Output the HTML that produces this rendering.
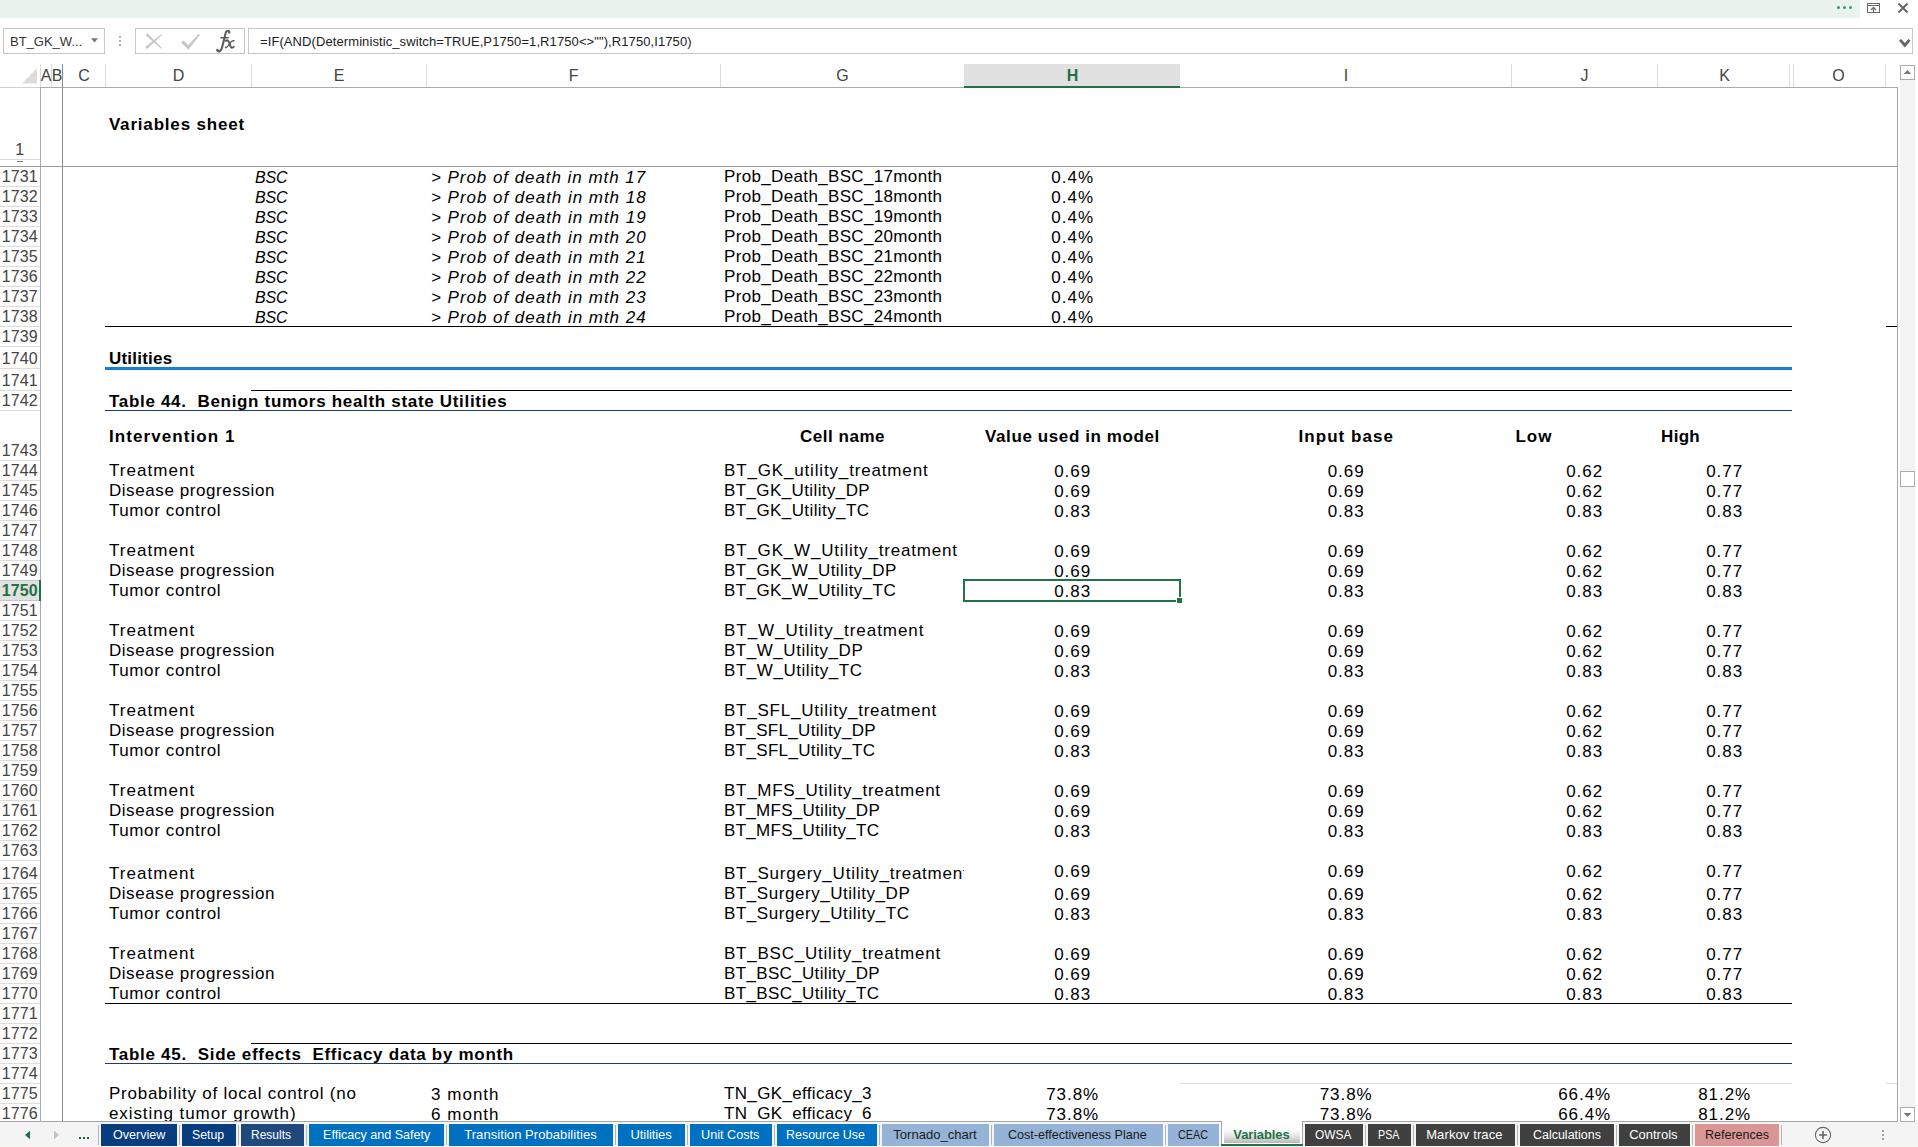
<!DOCTYPE html>
<html><head><meta charset="utf-8"><title>Excel</title><style>
html,body{margin:0;padding:0;background:#fff;}
body{width:1918px;height:1147px;position:relative;overflow:hidden;font-family:"Liberation Sans",sans-serif;}
div,span{position:absolute;box-sizing:border-box;white-space:pre;}
.c{font-size:17px;line-height:20px;height:20px;color:#000;letter-spacing:0.6px;}
.b{font-weight:bold;letter-spacing:0.55px;}
.i{font-style:italic;letter-spacing:0.9px;}
.rh{font-size:16px;line-height:20px;height:20px;left:0;width:39.5px;text-align:center;color:#444;letter-spacing:0.15px;}
.ch{font-size:16px;line-height:22px;height:22px;top:65px;text-align:center;color:#444;margin-left:0.6px;}
.hl{background:#000;height:1px;}
.vl{width:1px;}
.tab{top:1124px;height:22px;font-size:13px;line-height:22px;text-align:center;color:#fff;letter-spacing:0.1px;}
.ts{top:1125px;height:20px;width:1px;background:#b4b4b4;}
</style></head><body>
<div style="left:0;top:0;width:1860px;height:18px;background:#eaf4ee"></div>
<div style="left:1837px;top:6px;width:3px;height:3px;border-radius:50%;background:#3c9d6a"></div>
<div style="left:1843px;top:6px;width:3px;height:3px;border-radius:50%;background:#3c9d6a"></div>
<div style="left:1849px;top:6px;width:3px;height:3px;border-radius:50%;background:#3c9d6a"></div>
<svg style="position:absolute;left:1866px;top:2px" width="16" height="13" viewBox="0 0 16 13"><rect x="1.5" y="1.5" width="12" height="9" fill="none" stroke="#6a6a6a" stroke-width="1"/><path d="M1.5 3.5H13.5" stroke="#6a6a6a" stroke-width="1"/><path d="M7.5 10V5.6M5 8L7.5 5.4L10 8" fill="none" stroke="#6a6a6a" stroke-width="1.2"/></svg>
<svg style="position:absolute;left:1897px;top:2px" width="12" height="12" viewBox="0 0 12 12"><path d="M1.5 1.5L10.5 10.5M10.5 1.5L1.5 10.5" stroke="#666" stroke-width="2" fill="none"/></svg>
<div style="left:3px;top:28px;width:102px;height:26px;border:1px solid #c6c6c6;background:#fff"></div>
<div style="left:10px;top:34px;font-size:13px;line-height:16px;color:#333;letter-spacing:0px">BT_GK_W...</div>
<svg style="position:absolute;left:90px;top:37px" width="10" height="7" viewBox="0 0 10 7"><path d="M1 1.3H8L4.5 5.6Z" fill="#777"/></svg>
<div style="left:119px;top:36px;width:2px;height:2px;background:#b0b0b0"></div>
<div style="left:119px;top:40px;width:2px;height:2px;background:#b0b0b0"></div>
<div style="left:119px;top:44px;width:2px;height:2px;background:#b0b0b0"></div>
<div style="left:135px;top:28px;width:110px;height:26px;border:1px solid #c6c6c6;background:#fff"></div>
<svg style="position:absolute;left:140px;top:28px" width="100" height="26" viewBox="140 28 100 26"><path d="M145.5 35.3L147.5 33.3L162 47.9L161.2 48.7Z" fill="#c8c8c8"/><path d="M145.1 46.9L147.1 48.9L162 35L161.2 34.2Z" fill="#c8c8c8"/><path d="M181 42.6L183.6 40.4L188.2 45L198.8 33.7L199.9 35L188.4 49.8Z" fill="#c8c8c8"/><g fill="none" stroke="#5c5c5c" stroke-linecap="round"><path d="M229.4 32.1C229 30.6 227.1 30.3 226.2 31.8C225.3 33.4 225.1 35.6 224.5 37.8L222.3 46.5C221.8 48.5 221.2 50.8 219.6 51.2C218.6 51.5 217.6 51.1 217.2 50.2" stroke-width="2.1"/><path d="M220.8 37.8H228.2" stroke-width="1.5"/><path d="M225.9 40.9C227.4 39.7 228.5 40.6 229.1 42.4L230.5 46.2C231.1 47.9 232.3 48.3 233.7 46.9" stroke-width="2"/><path d="M233.8 40.7C232.4 40.1 231.5 41.2 230.5 42.6L228.3 45.6C227.3 47 226.5 48.2 225.5 47.4" stroke-width="1.3"/></g><circle cx="229.1" cy="32.4" r="1.2" fill="#666"/><circle cx="217.5" cy="50" r="1.2" fill="#666"/><circle cx="233.6" cy="40.8" r="0.9" fill="#666"/><circle cx="225.8" cy="47.3" r="0.9" fill="#666"/></svg>
<div style="left:248px;top:28px;width:1665px;height:26px;border:1px solid #c6c6c6;background:#fff"></div>
<div style="left:260px;top:34px;font-size:13px;line-height:16px;color:#222;letter-spacing:0.09px">=IF(AND(Deterministic_switch=TRUE,P1750=1,R1750&lt;&gt;&quot;&quot;),R1750,I1750)</div>
<svg style="position:absolute;left:1898px;top:38px" width="14" height="11" viewBox="0 0 14 11"><path d="M1 2.8L3.2 0.9L6.8 4.9L10.4 0.9L12.6 2.8L6.8 9.4Z" fill="#666"/></svg>
<div style="left:964px;top:64px;width:216px;height:22px;background:#e1e1e1"></div>
<div style="left:964px;top:86px;width:216px;height:2px;background:#217346"></div>
<div style="left:0;top:87px;width:40px;height:1px;background:#d0d0d0"></div>
<div style="left:40px;top:87px;width:924px;height:1px;background:#ababab"></div>
<div style="left:1180px;top:87px;width:718px;height:1px;background:#ababab"></div>
<svg style="position:absolute;left:21px;top:67px" width="17" height="17" viewBox="0 0 17 17"><path d="M16 1.2V16.6H0.8Z" fill="#dcdcdc"/></svg>
<div class="vl" style="left:40px;top:64px;height:23px;background:#dcdcdc"></div>
<div class="vl" style="left:51px;top:64px;height:23px;background:#dcdcdc"></div>
<div class="vl" style="left:105px;top:64px;height:23px;background:#dcdcdc"></div>
<div class="vl" style="left:251px;top:64px;height:23px;background:#dcdcdc"></div>
<div class="vl" style="left:426px;top:64px;height:23px;background:#dcdcdc"></div>
<div class="vl" style="left:720px;top:64px;height:23px;background:#dcdcdc"></div>
<div class="vl" style="left:1511px;top:64px;height:23px;background:#dcdcdc"></div>
<div class="vl" style="left:1657px;top:64px;height:23px;background:#dcdcdc"></div>
<div class="vl" style="left:1789px;top:64px;height:23px;background:#dcdcdc"></div>
<div class="vl" style="left:1793px;top:64px;height:23px;background:#dcdcdc"></div>
<div class="vl" style="left:1885px;top:64px;height:23px;background:#dcdcdc"></div>
<div class="ch" style="left:40px;width:11px">A</div>
<div class="ch" style="left:51px;width:11px">B</div>
<div class="ch" style="left:62px;width:43px">C</div>
<div class="ch" style="left:105px;width:146px">D</div>
<div class="ch" style="left:251px;width:175px">E</div>
<div class="ch" style="left:426px;width:294px">F</div>
<div class="ch" style="left:720px;width:244px">G</div>
<div class="ch" style="left:964px;width:216px;color:#217346;font-weight:bold">H</div>
<div class="ch" style="left:1180px;width:331px">I</div>
<div class="ch" style="left:1511px;width:146px">J</div>
<div class="ch" style="left:1657px;width:134px">K</div>
<div class="ch" style="left:1791px;width:94px">O</div>
<div class="vl" style="left:40px;top:87px;height:1035px;background:#ababab"></div>
<div style="left:0;top:159px;width:40px;height:1px;background:#dcdcdc"></div>
<div class="rh" style="top:140px">1</div>
<div style="left:17px;top:161px;width:6px;height:1px;background:#777"></div>
<div style="left:0;top:186px;width:40px;height:1px;background:#dcdcdc"></div>
<div class="rh" style="top:167px">1731</div>
<div style="left:0;top:206px;width:40px;height:1px;background:#dcdcdc"></div>
<div class="rh" style="top:187px">1732</div>
<div style="left:0;top:226px;width:40px;height:1px;background:#dcdcdc"></div>
<div class="rh" style="top:207px">1733</div>
<div style="left:0;top:246px;width:40px;height:1px;background:#dcdcdc"></div>
<div class="rh" style="top:227px">1734</div>
<div style="left:0;top:266px;width:40px;height:1px;background:#dcdcdc"></div>
<div class="rh" style="top:247px">1735</div>
<div style="left:0;top:286px;width:40px;height:1px;background:#dcdcdc"></div>
<div class="rh" style="top:267px">1736</div>
<div style="left:0;top:306px;width:40px;height:1px;background:#dcdcdc"></div>
<div class="rh" style="top:287px">1737</div>
<div style="left:0;top:326px;width:40px;height:1px;background:#dcdcdc"></div>
<div class="rh" style="top:307px">1738</div>
<div style="left:0;top:346px;width:40px;height:1px;background:#dcdcdc"></div>
<div class="rh" style="top:327px">1739</div>
<div style="left:0;top:368px;width:40px;height:1px;background:#dcdcdc"></div>
<div class="rh" style="top:349px">1740</div>
<div style="left:0;top:390px;width:40px;height:1px;background:#dcdcdc"></div>
<div class="rh" style="top:371px">1741</div>
<div style="left:0;top:410px;width:40px;height:1px;background:#dcdcdc"></div>
<div class="rh" style="top:391px">1742</div>
<div style="left:0;top:460px;width:40px;height:1px;background:#dcdcdc"></div>
<div class="rh" style="top:441px">1743</div>
<div style="left:0;top:480px;width:40px;height:1px;background:#dcdcdc"></div>
<div class="rh" style="top:461px">1744</div>
<div style="left:0;top:500px;width:40px;height:1px;background:#dcdcdc"></div>
<div class="rh" style="top:481px">1745</div>
<div style="left:0;top:520px;width:40px;height:1px;background:#dcdcdc"></div>
<div class="rh" style="top:501px">1746</div>
<div style="left:0;top:540px;width:40px;height:1px;background:#dcdcdc"></div>
<div class="rh" style="top:521px">1747</div>
<div style="left:0;top:560px;width:40px;height:1px;background:#dcdcdc"></div>
<div class="rh" style="top:541px">1748</div>
<div style="left:0;top:580px;width:40px;height:1px;background:#dcdcdc"></div>
<div class="rh" style="top:561px">1749</div>
<div style="left:0;top:600px;width:40px;height:1px;background:#dcdcdc"></div>
<div style="left:0;top:580px;width:40px;height:21px;background:#e1e1e1;border-top:1px solid #c6c6c6;border-bottom:1px solid #c6c6c6"></div>
<div style="left:39px;top:580px;width:2px;height:21px;background:#217346"></div>
<div class="rh" style="top:581px;color:#217346;font-weight:bold;letter-spacing:0.1px">1750</div>
<div style="left:0;top:620px;width:40px;height:1px;background:#dcdcdc"></div>
<div class="rh" style="top:601px">1751</div>
<div style="left:0;top:640px;width:40px;height:1px;background:#dcdcdc"></div>
<div class="rh" style="top:621px">1752</div>
<div style="left:0;top:660px;width:40px;height:1px;background:#dcdcdc"></div>
<div class="rh" style="top:641px">1753</div>
<div style="left:0;top:680px;width:40px;height:1px;background:#dcdcdc"></div>
<div class="rh" style="top:661px">1754</div>
<div style="left:0;top:700px;width:40px;height:1px;background:#dcdcdc"></div>
<div class="rh" style="top:681px">1755</div>
<div style="left:0;top:720px;width:40px;height:1px;background:#dcdcdc"></div>
<div class="rh" style="top:701px">1756</div>
<div style="left:0;top:740px;width:40px;height:1px;background:#dcdcdc"></div>
<div class="rh" style="top:721px">1757</div>
<div style="left:0;top:760px;width:40px;height:1px;background:#dcdcdc"></div>
<div class="rh" style="top:741px">1758</div>
<div style="left:0;top:780px;width:40px;height:1px;background:#dcdcdc"></div>
<div class="rh" style="top:761px">1759</div>
<div style="left:0;top:800px;width:40px;height:1px;background:#dcdcdc"></div>
<div class="rh" style="top:781px">1760</div>
<div style="left:0;top:820px;width:40px;height:1px;background:#dcdcdc"></div>
<div class="rh" style="top:801px">1761</div>
<div style="left:0;top:840px;width:40px;height:1px;background:#dcdcdc"></div>
<div class="rh" style="top:821px">1762</div>
<div style="left:0;top:860px;width:40px;height:1px;background:#dcdcdc"></div>
<div class="rh" style="top:841px">1763</div>
<div style="left:0;top:883px;width:40px;height:1px;background:#dcdcdc"></div>
<div class="rh" style="top:864px">1764</div>
<div style="left:0;top:903px;width:40px;height:1px;background:#dcdcdc"></div>
<div class="rh" style="top:884px">1765</div>
<div style="left:0;top:923px;width:40px;height:1px;background:#dcdcdc"></div>
<div class="rh" style="top:904px">1766</div>
<div style="left:0;top:943px;width:40px;height:1px;background:#dcdcdc"></div>
<div class="rh" style="top:924px">1767</div>
<div style="left:0;top:963px;width:40px;height:1px;background:#dcdcdc"></div>
<div class="rh" style="top:944px">1768</div>
<div style="left:0;top:983px;width:40px;height:1px;background:#dcdcdc"></div>
<div class="rh" style="top:964px">1769</div>
<div style="left:0;top:1003px;width:40px;height:1px;background:#dcdcdc"></div>
<div class="rh" style="top:984px">1770</div>
<div style="left:0;top:1023px;width:40px;height:1px;background:#dcdcdc"></div>
<div class="rh" style="top:1004px">1771</div>
<div style="left:0;top:1043px;width:40px;height:1px;background:#dcdcdc"></div>
<div class="rh" style="top:1024px">1772</div>
<div style="left:0;top:1063px;width:40px;height:1px;background:#dcdcdc"></div>
<div class="rh" style="top:1044px">1773</div>
<div style="left:0;top:1083px;width:40px;height:1px;background:#dcdcdc"></div>
<div class="rh" style="top:1064px">1774</div>
<div style="left:0;top:1103px;width:40px;height:1px;background:#dcdcdc"></div>
<div class="rh" style="top:1084px">1775</div>
<div class="rh" style="top:1104px">1776</div>
<div class="vl" style="left:62px;top:64px;height:1058px;background:#8e8e8e"></div>
<div style="left:0;top:166px;width:1898px;height:1px;background:#9b9b9b"></div>
<div class="vl" style="left:1897px;top:87px;height:1035px;background:#a6a6a6"></div>
<div class="c b" style="left:108.90px;top:115px;letter-spacing:0.818px;">Variables sheet</div>
<div class="c i" style="left:255.00px;top:168px;letter-spacing:-0.112px;font-size:16px;">BSC</div>
<div class="c i" style="left:431.00px;top:168px;letter-spacing:0.947px;">&gt; Prob of death in mth 17</div>
<div class="c " style="left:724.00px;top:167px;letter-spacing:0.345px;">Prob_Death_BSC_17month</div>
<div class="c " style="left:1051.30px;top:168px;letter-spacing:1.017px;">0.4%</div>
<div class="c i" style="left:255.00px;top:188px;letter-spacing:-0.112px;font-size:16px;">BSC</div>
<div class="c i" style="left:431.00px;top:188px;letter-spacing:0.968px;">&gt; Prob of death in mth 18</div>
<div class="c " style="left:724.00px;top:187px;letter-spacing:0.345px;">Prob_Death_BSC_18month</div>
<div class="c " style="left:1051.30px;top:188px;letter-spacing:1.017px;">0.4%</div>
<div class="c i" style="left:255.00px;top:208px;letter-spacing:-0.112px;font-size:16px;">BSC</div>
<div class="c i" style="left:431.00px;top:208px;letter-spacing:0.968px;">&gt; Prob of death in mth 19</div>
<div class="c " style="left:724.00px;top:207px;letter-spacing:0.345px;">Prob_Death_BSC_19month</div>
<div class="c " style="left:1051.30px;top:208px;letter-spacing:1.017px;">0.4%</div>
<div class="c i" style="left:255.00px;top:228px;letter-spacing:-0.112px;font-size:16px;">BSC</div>
<div class="c i" style="left:431.00px;top:228px;letter-spacing:0.968px;">&gt; Prob of death in mth 20</div>
<div class="c " style="left:724.00px;top:227px;letter-spacing:0.345px;">Prob_Death_BSC_20month</div>
<div class="c " style="left:1051.30px;top:228px;letter-spacing:1.017px;">0.4%</div>
<div class="c i" style="left:255.00px;top:248px;letter-spacing:-0.112px;font-size:16px;">BSC</div>
<div class="c i" style="left:431.00px;top:248px;letter-spacing:0.968px;">&gt; Prob of death in mth 21</div>
<div class="c " style="left:724.00px;top:247px;letter-spacing:0.345px;">Prob_Death_BSC_21month</div>
<div class="c " style="left:1051.30px;top:248px;letter-spacing:1.017px;">0.4%</div>
<div class="c i" style="left:255.00px;top:268px;letter-spacing:-0.112px;font-size:16px;">BSC</div>
<div class="c i" style="left:431.00px;top:268px;letter-spacing:0.968px;">&gt; Prob of death in mth 22</div>
<div class="c " style="left:724.00px;top:267px;letter-spacing:0.345px;">Prob_Death_BSC_22month</div>
<div class="c " style="left:1051.30px;top:268px;letter-spacing:1.017px;">0.4%</div>
<div class="c i" style="left:255.00px;top:288px;letter-spacing:-0.112px;font-size:16px;">BSC</div>
<div class="c i" style="left:431.00px;top:288px;letter-spacing:0.968px;">&gt; Prob of death in mth 23</div>
<div class="c " style="left:724.00px;top:287px;letter-spacing:0.345px;">Prob_Death_BSC_23month</div>
<div class="c " style="left:1051.30px;top:288px;letter-spacing:1.017px;">0.4%</div>
<div class="c i" style="left:255.00px;top:308px;letter-spacing:-0.112px;font-size:16px;">BSC</div>
<div class="c i" style="left:431.00px;top:308px;letter-spacing:0.968px;">&gt; Prob of death in mth 24</div>
<div class="c " style="left:724.00px;top:307px;letter-spacing:0.345px;">Prob_Death_BSC_24month</div>
<div class="c " style="left:1051.30px;top:308px;letter-spacing:1.017px;">0.4%</div>
<div style="left:105px;top:326px;width:1687px;height:1px;background:#000"></div>
<div style="left:1886px;top:326px;width:11px;height:1px;background:#000"></div>
<div class="c b" style="left:108.90px;top:349px;letter-spacing:0.228px;">Utilities</div>
<div style="left:105px;top:367px;width:1687px;height:3px;background:#1380d3"></div>
<div style="left:251px;top:390px;width:1541px;height:1px;background:#000"></div>
<div class="c b" style="left:109.00px;top:392px;letter-spacing:0.684px;">Table 44.  Benign tumors health state Utilities</div>
<div style="left:105px;top:410px;width:1687px;height:1px;background:#1f3d6b"></div>
<div class="c b" style="left:108.90px;top:427px;letter-spacing:1.092px;">Intervention 1</div>
<div class="c b" style="left:799.90px;top:427px;letter-spacing:0.544px;">Cell name</div>
<div class="c b" style="left:985.05px;top:427px;letter-spacing:0.6px;">Value used in model</div>
<div class="c b" style="left:1298.55px;top:427px;letter-spacing:1.033px;">Input base</div>
<div class="c b" style="left:1515.40px;top:427px;letter-spacing:1.088px;">Low</div>
<div class="c b" style="left:1661.10px;top:427px;letter-spacing:0.283px;">High</div>
<div class="c " style="left:108.90px;top:461px;letter-spacing:1.053px;">Treatment</div>
<div class="c " style="left:724.00px;top:461px;letter-spacing:0.839px;">BT_GK_utility_treatment</div>
<div class="c " style="left:1054.15px;top:462px;letter-spacing:0.992px;">0.69</div>
<div class="c " style="left:1327.65px;top:462px;letter-spacing:0.992px;">0.69</div>
<div class="c " style="left:1566.15px;top:462px;letter-spacing:0.992px;">0.62</div>
<div class="c " style="left:1706.15px;top:462px;letter-spacing:0.992px;">0.77</div>
<div class="c " style="left:108.90px;top:481px;letter-spacing:0.589px;">Disease progression</div>
<div class="c " style="left:724.00px;top:481px;letter-spacing:0.388px;">BT_GK_Utility_DP</div>
<div class="c " style="left:1054.15px;top:482px;letter-spacing:0.992px;">0.69</div>
<div class="c " style="left:1327.65px;top:482px;letter-spacing:0.992px;">0.69</div>
<div class="c " style="left:1566.15px;top:482px;letter-spacing:0.992px;">0.62</div>
<div class="c " style="left:1706.15px;top:482px;letter-spacing:0.992px;">0.77</div>
<div class="c " style="left:108.90px;top:501px;letter-spacing:0.621px;">Tumor control</div>
<div class="c " style="left:724.00px;top:501px;letter-spacing:0.408px;">BT_GK_Utility_TC</div>
<div class="c " style="left:1054.15px;top:502px;letter-spacing:0.992px;">0.83</div>
<div class="c " style="left:1327.65px;top:502px;letter-spacing:0.992px;">0.83</div>
<div class="c " style="left:1566.15px;top:502px;letter-spacing:0.992px;">0.83</div>
<div class="c " style="left:1706.15px;top:502px;letter-spacing:0.992px;">0.83</div>
<div class="c " style="left:108.90px;top:541px;letter-spacing:1.053px;">Treatment</div>
<div class="c " style="left:724.00px;top:541px;letter-spacing:0.812px;">BT_GK_W_Utility_treatment</div>
<div class="c " style="left:1054.15px;top:542px;letter-spacing:0.992px;">0.69</div>
<div class="c " style="left:1327.65px;top:542px;letter-spacing:0.992px;">0.69</div>
<div class="c " style="left:1566.15px;top:542px;letter-spacing:0.992px;">0.62</div>
<div class="c " style="left:1706.15px;top:542px;letter-spacing:0.992px;">0.77</div>
<div class="c " style="left:108.90px;top:561px;letter-spacing:0.589px;">Disease progression</div>
<div class="c " style="left:724.00px;top:561px;letter-spacing:0.413px;">BT_GK_W_Utility_DP</div>
<div class="c " style="left:1054.15px;top:562px;letter-spacing:0.992px;">0.69</div>
<div class="c " style="left:1327.65px;top:562px;letter-spacing:0.992px;">0.69</div>
<div class="c " style="left:1566.15px;top:562px;letter-spacing:0.992px;">0.62</div>
<div class="c " style="left:1706.15px;top:562px;letter-spacing:0.992px;">0.77</div>
<div class="c " style="left:108.90px;top:581px;letter-spacing:0.621px;">Tumor control</div>
<div class="c " style="left:724.00px;top:581px;letter-spacing:0.431px;">BT_GK_W_Utility_TC</div>
<div class="c " style="left:1054.15px;top:582px;letter-spacing:0.992px;">0.83</div>
<div class="c " style="left:1327.65px;top:582px;letter-spacing:0.992px;">0.83</div>
<div class="c " style="left:1566.15px;top:582px;letter-spacing:0.992px;">0.83</div>
<div class="c " style="left:1706.15px;top:582px;letter-spacing:0.992px;">0.83</div>
<div class="c " style="left:108.90px;top:621px;letter-spacing:1.053px;">Treatment</div>
<div class="c " style="left:724.00px;top:621px;letter-spacing:0.952px;">BT_W_Utility_treatment</div>
<div class="c " style="left:1054.15px;top:622px;letter-spacing:0.992px;">0.69</div>
<div class="c " style="left:1327.65px;top:622px;letter-spacing:0.992px;">0.69</div>
<div class="c " style="left:1566.15px;top:622px;letter-spacing:0.992px;">0.62</div>
<div class="c " style="left:1706.15px;top:622px;letter-spacing:0.992px;">0.77</div>
<div class="c " style="left:108.90px;top:641px;letter-spacing:0.589px;">Disease progression</div>
<div class="c " style="left:724.00px;top:641px;letter-spacing:0.532px;">BT_W_Utility_DP</div>
<div class="c " style="left:1054.15px;top:642px;letter-spacing:0.992px;">0.69</div>
<div class="c " style="left:1327.65px;top:642px;letter-spacing:0.992px;">0.69</div>
<div class="c " style="left:1566.15px;top:642px;letter-spacing:0.992px;">0.62</div>
<div class="c " style="left:1706.15px;top:642px;letter-spacing:0.992px;">0.77</div>
<div class="c " style="left:108.90px;top:661px;letter-spacing:0.621px;">Tumor control</div>
<div class="c " style="left:724.00px;top:661px;letter-spacing:0.545px;">BT_W_Utility_TC</div>
<div class="c " style="left:1054.15px;top:662px;letter-spacing:0.992px;">0.83</div>
<div class="c " style="left:1327.65px;top:662px;letter-spacing:0.992px;">0.83</div>
<div class="c " style="left:1566.15px;top:662px;letter-spacing:0.992px;">0.83</div>
<div class="c " style="left:1706.15px;top:662px;letter-spacing:0.992px;">0.83</div>
<div class="c " style="left:108.90px;top:701px;letter-spacing:1.053px;">Treatment</div>
<div class="c " style="left:724.00px;top:701px;letter-spacing:0.76px;">BT_SFL_Utility_treatment</div>
<div class="c " style="left:1054.15px;top:702px;letter-spacing:0.992px;">0.69</div>
<div class="c " style="left:1327.65px;top:702px;letter-spacing:0.992px;">0.69</div>
<div class="c " style="left:1566.15px;top:702px;letter-spacing:0.992px;">0.62</div>
<div class="c " style="left:1706.15px;top:702px;letter-spacing:0.992px;">0.77</div>
<div class="c " style="left:108.90px;top:721px;letter-spacing:0.589px;">Disease progression</div>
<div class="c " style="left:724.00px;top:721px;letter-spacing:0.325px;">BT_SFL_Utility_DP</div>
<div class="c " style="left:1054.15px;top:722px;letter-spacing:0.992px;">0.69</div>
<div class="c " style="left:1327.65px;top:722px;letter-spacing:0.992px;">0.69</div>
<div class="c " style="left:1566.15px;top:722px;letter-spacing:0.992px;">0.62</div>
<div class="c " style="left:1706.15px;top:722px;letter-spacing:0.992px;">0.77</div>
<div class="c " style="left:108.90px;top:741px;letter-spacing:0.621px;">Tumor control</div>
<div class="c " style="left:724.00px;top:741px;letter-spacing:0.344px;">BT_SFL_Utility_TC</div>
<div class="c " style="left:1054.15px;top:742px;letter-spacing:0.992px;">0.83</div>
<div class="c " style="left:1327.65px;top:742px;letter-spacing:0.992px;">0.83</div>
<div class="c " style="left:1566.15px;top:742px;letter-spacing:0.992px;">0.83</div>
<div class="c " style="left:1706.15px;top:742px;letter-spacing:0.992px;">0.83</div>
<div class="c " style="left:108.90px;top:781px;letter-spacing:1.053px;">Treatment</div>
<div class="c " style="left:724.00px;top:781px;letter-spacing:0.727px;">BT_MFS_Utility_treatment</div>
<div class="c " style="left:1054.15px;top:782px;letter-spacing:0.992px;">0.69</div>
<div class="c " style="left:1327.65px;top:782px;letter-spacing:0.992px;">0.69</div>
<div class="c " style="left:1566.15px;top:782px;letter-spacing:0.992px;">0.62</div>
<div class="c " style="left:1706.15px;top:782px;letter-spacing:0.992px;">0.77</div>
<div class="c " style="left:108.90px;top:801px;letter-spacing:0.589px;">Disease progression</div>
<div class="c " style="left:724.00px;top:801px;letter-spacing:0.286px;">BT_MFS_Utility_DP</div>
<div class="c " style="left:1054.15px;top:802px;letter-spacing:0.992px;">0.69</div>
<div class="c " style="left:1327.65px;top:802px;letter-spacing:0.992px;">0.69</div>
<div class="c " style="left:1566.15px;top:802px;letter-spacing:0.992px;">0.62</div>
<div class="c " style="left:1706.15px;top:802px;letter-spacing:0.992px;">0.77</div>
<div class="c " style="left:108.90px;top:821px;letter-spacing:0.621px;">Tumor control</div>
<div class="c " style="left:724.00px;top:821px;letter-spacing:0.297px;">BT_MFS_Utility_TC</div>
<div class="c " style="left:1054.15px;top:822px;letter-spacing:0.992px;">0.83</div>
<div class="c " style="left:1327.65px;top:822px;letter-spacing:0.992px;">0.83</div>
<div class="c " style="left:1566.15px;top:822px;letter-spacing:0.992px;">0.83</div>
<div class="c " style="left:1706.15px;top:822px;letter-spacing:0.992px;">0.83</div>
<div class="c " style="left:108.90px;top:864px;letter-spacing:1.053px;">Treatment</div>
<div style="left:720px;top:864px;width:244px;height:20px;overflow:hidden"><div class="c " style="left:4.00px;top:0;letter-spacing:0.767px">BT_Surgery_Utility_treatment</div></div>
<div class="c " style="left:1054.15px;top:862px;letter-spacing:0.992px;">0.69</div>
<div class="c " style="left:1327.65px;top:862px;letter-spacing:0.992px;">0.69</div>
<div class="c " style="left:1566.15px;top:862px;letter-spacing:0.992px;">0.62</div>
<div class="c " style="left:1706.15px;top:862px;letter-spacing:0.992px;">0.77</div>
<div class="c " style="left:108.90px;top:884px;letter-spacing:0.589px;">Disease progression</div>
<div class="c " style="left:724.00px;top:884px;letter-spacing:0.547px;">BT_Surgery_Utility_DP</div>
<div class="c " style="left:1054.15px;top:885px;letter-spacing:0.992px;">0.69</div>
<div class="c " style="left:1327.65px;top:885px;letter-spacing:0.992px;">0.69</div>
<div class="c " style="left:1566.15px;top:885px;letter-spacing:0.992px;">0.62</div>
<div class="c " style="left:1706.15px;top:885px;letter-spacing:0.992px;">0.77</div>
<div class="c " style="left:108.90px;top:904px;letter-spacing:0.621px;">Tumor control</div>
<div class="c " style="left:724.00px;top:904px;letter-spacing:0.556px;">BT_Surgery_Utility_TC</div>
<div class="c " style="left:1054.15px;top:905px;letter-spacing:0.992px;">0.83</div>
<div class="c " style="left:1327.65px;top:905px;letter-spacing:0.992px;">0.83</div>
<div class="c " style="left:1566.15px;top:905px;letter-spacing:0.992px;">0.83</div>
<div class="c " style="left:1706.15px;top:905px;letter-spacing:0.992px;">0.83</div>
<div class="c " style="left:108.90px;top:944px;letter-spacing:1.053px;">Treatment</div>
<div class="c " style="left:724.00px;top:944px;letter-spacing:0.771px;">BT_BSC_Utility_treatment</div>
<div class="c " style="left:1054.15px;top:945px;letter-spacing:0.992px;">0.69</div>
<div class="c " style="left:1327.65px;top:945px;letter-spacing:0.992px;">0.69</div>
<div class="c " style="left:1566.15px;top:945px;letter-spacing:0.992px;">0.62</div>
<div class="c " style="left:1706.15px;top:945px;letter-spacing:0.992px;">0.77</div>
<div class="c " style="left:108.90px;top:964px;letter-spacing:0.589px;">Disease progression</div>
<div class="c " style="left:724.00px;top:964px;letter-spacing:0.341px;">BT_BSC_Utility_DP</div>
<div class="c " style="left:1054.15px;top:965px;letter-spacing:0.992px;">0.69</div>
<div class="c " style="left:1327.65px;top:965px;letter-spacing:0.992px;">0.69</div>
<div class="c " style="left:1566.15px;top:965px;letter-spacing:0.992px;">0.62</div>
<div class="c " style="left:1706.15px;top:965px;letter-spacing:0.992px;">0.77</div>
<div class="c " style="left:108.90px;top:984px;letter-spacing:0.621px;">Tumor control</div>
<div class="c " style="left:724.00px;top:984px;letter-spacing:0.359px;">BT_BSC_Utility_TC</div>
<div class="c " style="left:1054.15px;top:985px;letter-spacing:0.992px;">0.83</div>
<div class="c " style="left:1327.65px;top:985px;letter-spacing:0.992px;">0.83</div>
<div class="c " style="left:1566.15px;top:985px;letter-spacing:0.992px;">0.83</div>
<div class="c " style="left:1706.15px;top:985px;letter-spacing:0.992px;">0.83</div>
<div style="left:105px;top:1003px;width:1687px;height:1px;background:#000"></div>
<div style="left:251px;top:1043px;width:1541px;height:1px;background:#000"></div>
<div class="c b" style="left:109.00px;top:1045px;letter-spacing:0.703px;">Table 45.  Side effects  Efficacy data by month</div>
<div style="left:105px;top:1063px;width:1687px;height:1px;background:#1f3d6b"></div>
<div style="left:1180px;top:1083px;width:612px;height:1px;background:#dcdcdc"></div>
<div style="left:1886px;top:1083px;width:11px;height:1px;background:#dcdcdc"></div>
<div class="c " style="left:108.90px;top:1084px;letter-spacing:0.774px;">Probability of local control (no</div>
<div class="c " style="left:108.90px;top:1104px;letter-spacing:0.926px;">existing tumor growth)</div>
<div class="c " style="left:431.00px;top:1085px;letter-spacing:1.021px;">3 month</div>
<div class="c " style="left:431.00px;top:1105px;letter-spacing:1.021px;">6 month</div>
<div class="c " style="left:724.00px;top:1084px;letter-spacing:0.342px;">TN_GK_efficacy_3</div>
<div class="c " style="left:724.00px;top:1104px;letter-spacing:0.342px;">TN_GK_efficacy_6</div>
<div class="c " style="left:1046.15px;top:1085px;letter-spacing:0.963px;">73.8%</div>
<div class="c " style="left:1319.65px;top:1085px;letter-spacing:0.963px;">73.8%</div>
<div class="c " style="left:1558.15px;top:1085px;letter-spacing:0.963px;">66.4%</div>
<div class="c " style="left:1698.15px;top:1085px;letter-spacing:0.963px;">81.2%</div>
<div class="c " style="left:1046.15px;top:1105px;letter-spacing:0.963px;">73.8%</div>
<div class="c " style="left:1319.65px;top:1105px;letter-spacing:0.963px;">73.8%</div>
<div class="c " style="left:1558.15px;top:1105px;letter-spacing:0.963px;">66.4%</div>
<div class="c " style="left:1698.15px;top:1105px;letter-spacing:0.963px;">81.2%</div>
<div style="left:963px;top:579px;width:218px;height:23px;border:2px solid #217346"></div>
<div style="left:1176px;top:597px;width:7px;height:7px;background:#217346;border:1px solid #fff"></div>
<div style="left:0;top:1121px;width:1918px;height:26px;background:#f4f4f4"></div>
<div style="left:0;top:1146px;width:1918px;height:1px;background:#f7f5f0"></div>
<div style="left:0px;top:1121px;width:1221px;height:1px;background:#a6a6a6"></div>
<div style="left:1303px;top:1121px;width:595px;height:1px;background:#a6a6a6"></div>
<div style="left:1898px;top:64px;width:20px;height:1058px;background:#fff"></div>
<div style="left:1900px;top:80px;width:15px;height:1027px;background:#f3f3f3"></div>
<div style="left:1900px;top:65px;width:15px;height:15px;border:1px solid #ababab;background:#fff"></div>
<svg style="position:absolute;left:1903px;top:69px" width="9" height="6" viewBox="0 0 9 6"><path d="M0.7 5L4.5 1L8.3 5Z" fill="#777"/></svg>
<div style="left:1900px;top:1107px;width:15px;height:15px;border:1px solid #ababab;background:#fff"></div>
<svg style="position:absolute;left:1903px;top:1112px" width="9" height="6" viewBox="0 0 9 6"><path d="M0.7 1L4.5 5L8.3 1Z" fill="#777"/></svg>
<div style="left:1900px;top:471px;width:15px;height:16px;border:1px solid #ababab;background:#fff"></div>
<div class="vl" style="left:1897px;top:87px;height:1035px;background:#a6a6a6"></div>
<svg style="position:absolute;left:24px;top:1130px" width="7" height="10" viewBox="0 0 7 10"><path d="M6 0.8V9.2L1 5Z" fill="#1e7145"/></svg>
<svg style="position:absolute;left:53px;top:1130px" width="7" height="10" viewBox="0 0 7 10"><path d="M1 0.8V9.2L6 5Z" fill="#c2c2c2"/></svg>
<div style="left:79px;top:1137px;width:2px;height:2px;background:#1e5c3a"></div>
<div style="left:83px;top:1137px;width:2px;height:2px;background:#1e5c3a"></div>
<div style="left:87px;top:1137px;width:2px;height:2px;background:#1e5c3a"></div>
<div style="left:101px;top:1124px;width:76px;height:22px;background:#083e7f"></div>
<div style="left:112.50px;top:1124px;height:22px;line-height:22px;font-size:13px;color:#fff;letter-spacing:0px;transform:scaleX(0.968);transform-origin:0.00px 50%;">Overview</div>
<div style="left:182px;top:1124px;width:54px;height:22px;background:#083e7f"></div>
<div style="left:192.00px;top:1124px;height:22px;line-height:22px;font-size:13px;color:#fff;letter-spacing:0px;transform:scaleX(0.947);transform-origin:0.00px 50%;">Setup</div>
<div style="left:241px;top:1124px;width:63px;height:22px;background:#1f497d"></div>
<div style="left:251.30px;top:1124px;height:22px;line-height:22px;font-size:13px;color:#fff;letter-spacing:0px;transform:scaleX(0.922);transform-origin:0.00px 50%;">Results</div>
<div style="left:309px;top:1124px;width:135px;height:22px;background:#0070c0"></div>
<div style="left:322.50px;top:1124px;height:22px;line-height:22px;font-size:13px;color:#fff;letter-spacing:0px;transform:scaleX(0.966);transform-origin:0.00px 50%;">Efficacy and Safety</div>
<div style="left:449px;top:1124px;width:164px;height:22px;background:#0070c0"></div>
<div style="left:464.20px;top:1124px;height:22px;line-height:22px;font-size:13px;color:#fff;letter-spacing:0.065px;">Transition Probabilities</div>
<div style="left:618px;top:1124px;width:67px;height:22px;background:#0070c0"></div>
<div style="left:630.50px;top:1124px;height:22px;line-height:22px;font-size:13px;color:#fff;letter-spacing:-0.084px;">Utilities</div>
<div style="left:690px;top:1124px;width:82px;height:22px;background:#0070c0"></div>
<div style="left:701.30px;top:1124px;height:22px;line-height:22px;font-size:13px;color:#fff;letter-spacing:0px;transform:scaleX(0.973);transform-origin:0.00px 50%;">Unit Costs</div>
<div style="left:777px;top:1124px;width:100px;height:22px;background:#0070c0"></div>
<div style="left:786.30px;top:1124px;height:22px;line-height:22px;font-size:13px;color:#fff;letter-spacing:0px;transform:scaleX(0.959);transform-origin:0.00px 50%;">Resource Use</div>
<div style="left:882px;top:1124px;width:107px;height:22px;background:#95b3d7"></div>
<div style="left:893.30px;top:1124px;height:22px;line-height:22px;font-size:13px;color:#1a1a1a;letter-spacing:0.023px;">Tornado_chart</div>
<div style="left:994px;top:1124px;width:169px;height:22px;background:#95b3d7"></div>
<div style="left:1008.30px;top:1124px;height:22px;line-height:22px;font-size:13px;color:#1a1a1a;letter-spacing:0px;transform:scaleX(0.966);transform-origin:0.00px 50%;">Cost-effectiveness Plane</div>
<div style="left:1168px;top:1124px;width:51px;height:22px;background:#95b3d7"></div>
<div style="left:1177.50px;top:1124px;height:22px;line-height:22px;font-size:13px;color:#1a1a1a;letter-spacing:0px;transform:scaleX(0.830);transform-origin:0.00px 50%;">CEAC</div>
<div style="left:1305px;top:1124px;width:58px;height:22px;background:#404040"></div>
<div style="left:1315.30px;top:1124px;height:22px;line-height:22px;font-size:13px;color:#fff;letter-spacing:0px;transform:scaleX(0.916);transform-origin:0.00px 50%;">OWSA</div>
<div style="left:1368px;top:1124px;width:43px;height:22px;background:#404040"></div>
<div style="left:1378.00px;top:1124px;height:22px;line-height:22px;font-size:13px;color:#fff;letter-spacing:0px;transform:scaleX(0.823);transform-origin:0.00px 50%;">PSA</div>
<div style="left:1416px;top:1124px;width:99px;height:22px;background:#404040"></div>
<div style="left:1426.20px;top:1124px;height:22px;line-height:22px;font-size:13px;color:#fff;letter-spacing:0.107px;">Markov trace</div>
<div style="left:1520px;top:1124px;width:94px;height:22px;background:#404040"></div>
<div style="left:1532.50px;top:1124px;height:22px;line-height:22px;font-size:13px;color:#fff;letter-spacing:0px;transform:scaleX(0.959);transform-origin:0.00px 50%;">Calculations</div>
<div style="left:1619px;top:1124px;width:71px;height:22px;background:#404040"></div>
<div style="left:1629.20px;top:1124px;height:22px;line-height:22px;font-size:13px;color:#fff;letter-spacing:-0.011px;">Controls</div>
<div style="left:1695px;top:1124px;width:84px;height:22px;background:#d99694"></div>
<div style="left:1705.10px;top:1124px;height:22px;line-height:22px;font-size:13px;color:#1a1a1a;letter-spacing:0px;transform:scaleX(0.961);transform-origin:0.00px 50%;">References</div>
<div class="ts" style="left:98px"></div>
<div class="ts" style="left:179px"></div>
<div class="ts" style="left:238px"></div>
<div class="ts" style="left:306px"></div>
<div class="ts" style="left:446px"></div>
<div class="ts" style="left:615px"></div>
<div class="ts" style="left:687px"></div>
<div class="ts" style="left:774px"></div>
<div class="ts" style="left:879px"></div>
<div class="ts" style="left:991px"></div>
<div class="ts" style="left:1165px"></div>
<div class="ts" style="left:1365px"></div>
<div class="ts" style="left:1413px"></div>
<div class="ts" style="left:1517px"></div>
<div class="ts" style="left:1616px"></div>
<div class="ts" style="left:1692px"></div>
<div class="ts" style="left:1781px"></div>
<div style="left:1221px;top:1121px;width:82px;height:25px;border-left:1px solid #a6a6a6;border-right:1px solid #a6a6a6;background:#fff"></div>
<div style="left:1224px;top:1124px;width:76px;height:19px;background:linear-gradient(#ffffff 0%,#fcfcfc 30%,#e4e4e4 65%,#b8b8b8 100%)"></div>
<div style="left:1221px;top:1144px;width:82px;height:2px;background:#217346"></div>
<div style="left:1233.30px;top:1124px;height:22px;line-height:22px;font-size:13px;color:#217346;letter-spacing:-0.091px;font-weight:bold;">Variables</div>
<svg style="position:absolute;left:1814px;top:1126px" width="18" height="18" viewBox="0 0 18 18"><circle cx="9" cy="9" r="7.6" fill="none" stroke="#666" stroke-width="1.1"/><path d="M5 9H13M9 5V13" stroke="#666" stroke-width="1.6"/></svg>
<div style="left:1882px;top:1130px;width:2px;height:2px;background:#a0a0a0"></div>
<div style="left:1882px;top:1134px;width:2px;height:2px;background:#a0a0a0"></div>
<div style="left:1882px;top:1138px;width:2px;height:2px;background:#a0a0a0"></div>
</body></html>
